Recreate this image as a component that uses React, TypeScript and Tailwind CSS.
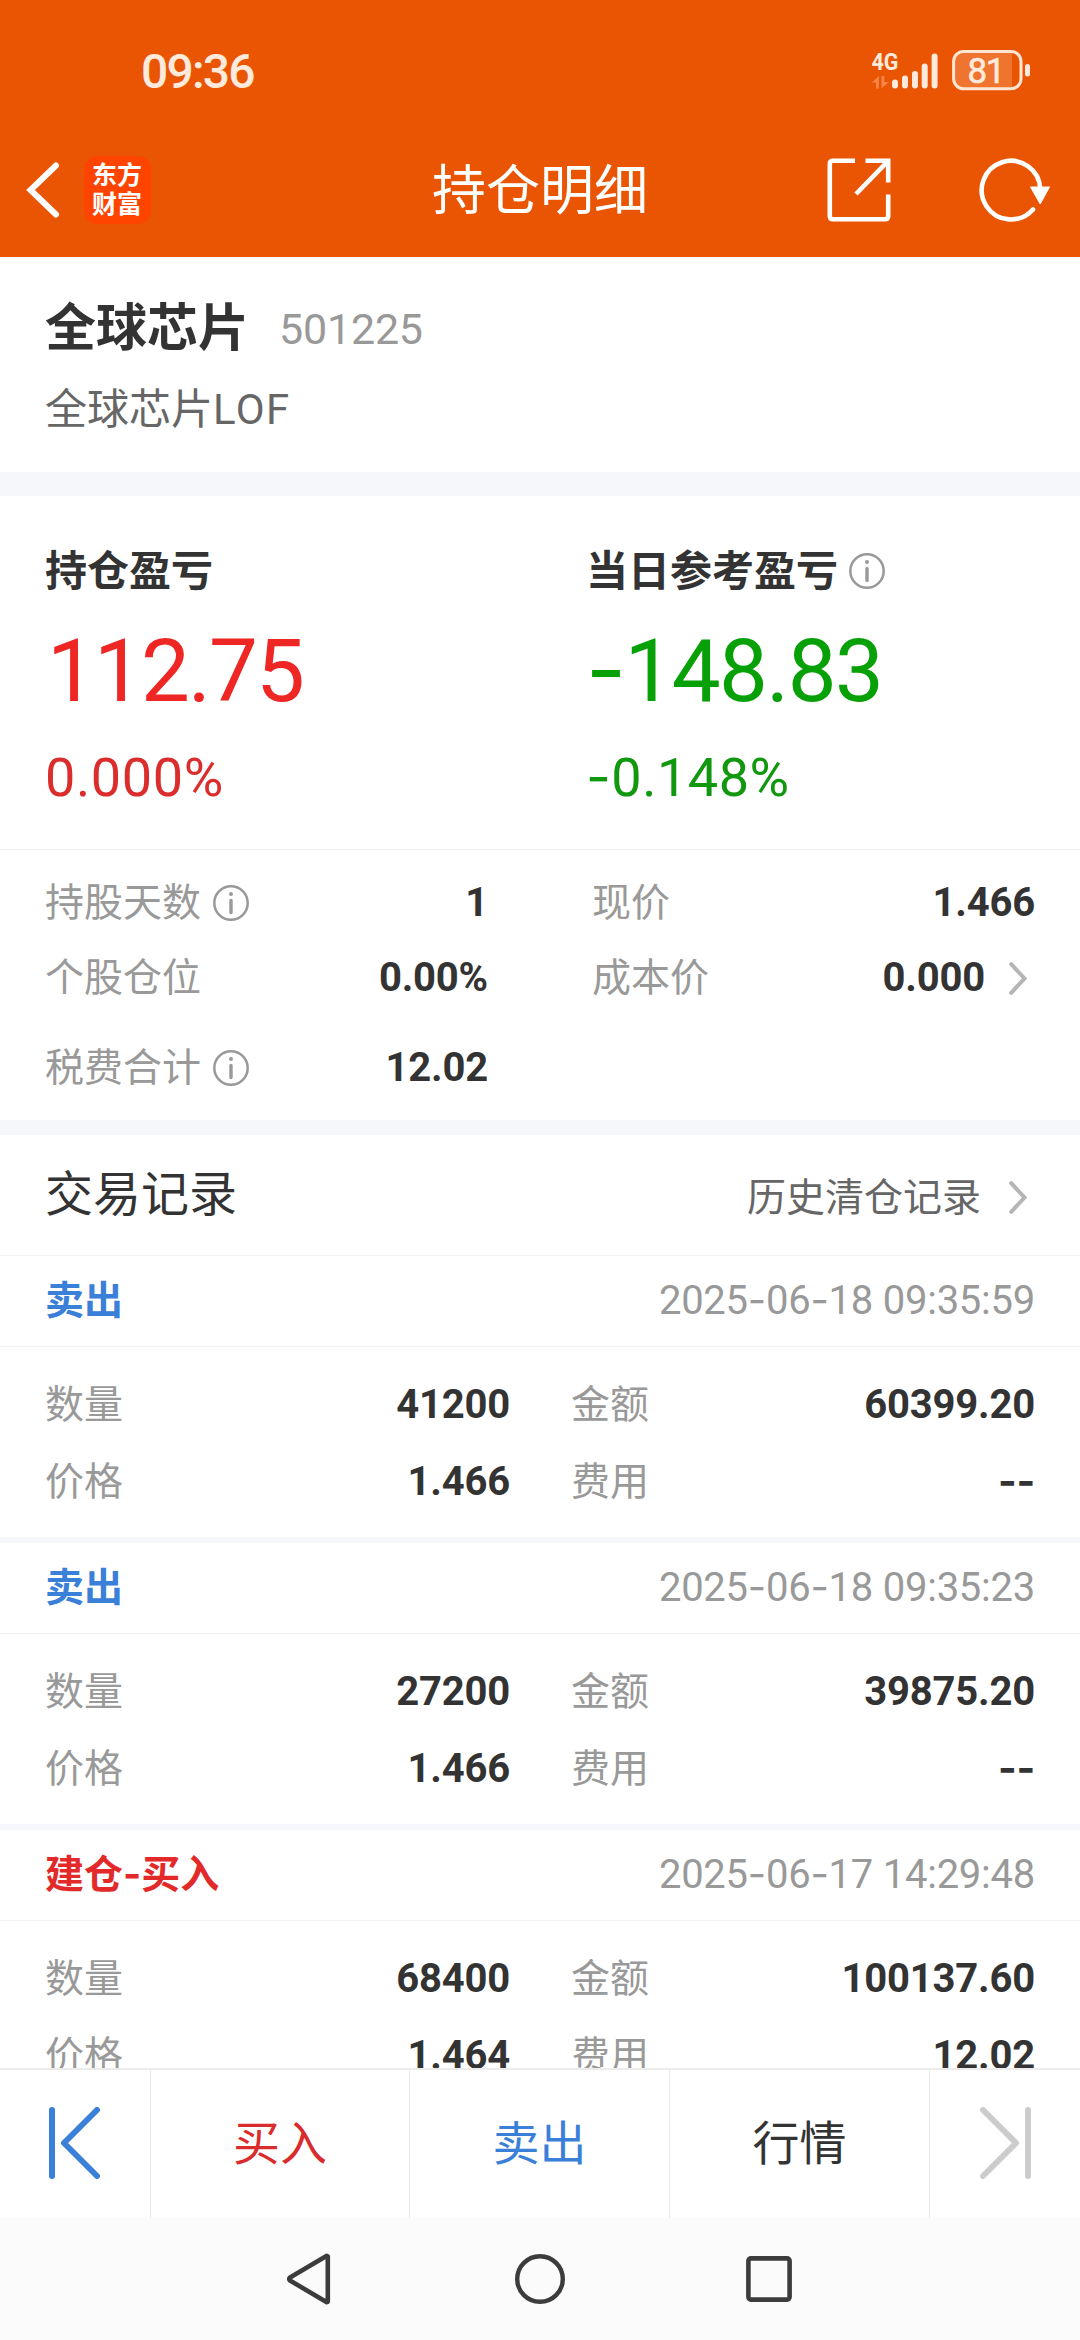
import React from "react";

type Trade = {
  title: string;
  tone: string;
  time: string;
  quantity: string;
  amount: string;
  price: string;
  fee: string;
};

const trades: Trade[] = [
  { title: "卖出", tone: "text-[#3a80d8]", time: "2025-06-18 09:35:59", quantity: "41200", amount: "60399.20", price: "1.466", fee: "--" },
  { title: "卖出", tone: "text-[#3a80d8]", time: "2025-06-18 09:35:23", quantity: "27200", amount: "39875.20", price: "1.466", fee: "--" },
  { title: "建仓-买入", tone: "text-[#e32a2a]", time: "2025-06-17 14:29:48", quantity: "68400", amount: "100137.60", price: "1.464", fee: "12.02" },
];

/** Sets hyphens in Inter, whose dash is long and centred on the digits. */
function Dashed({ text }: { text: string }) {
  return (
    <>
      {text.split(/(-)/).map((part, i) =>
        part === "-" ? (
          <span key={i} className="font-['Inter'] leading-[0]">-</span>
        ) : (
          <React.Fragment key={i}>{part}</React.Fragment>
        ),
      )}
    </>
  );
}

function InfoIcon() {
  return (
    <svg width="36" height="36" viewBox="0 0 36 36" fill="none" className="shrink-0">
      <circle cx="18" cy="18" r="16.7" stroke="#999" strokeWidth="2.5" />
      <circle cx="18" cy="9" r="2" fill="#999" />
      <path d="M18 15.5V27.5" stroke="#999" strokeWidth="3.4" strokeLinecap="round" />
    </svg>
  );
}

function ChevronRight() {
  return (
    <svg width="18" height="33" viewBox="0 0 18 33" fill="none" className="shrink-0">
      <path d="M2.2 2.2L15.5 16.5L2.2 30.8" stroke="#b5b5b5" strokeWidth="4" strokeLinecap="round" />
    </svg>
  );
}

function StatusBar() {
  return (
    <div className="flex h-[140px] items-center justify-between pl-[141px] pr-[50px]">
      <span className="pt-[2px] text-[48px] font-medium leading-[49px] tracking-[-1.8px] text-[#ffeadb]">09:36</span>
      <svg width="158" height="42" viewBox="872 48 158 42" fill="none">
        <text x="871.5" y="69" fontSize="24" fontWeight="700" textLength="27" lengthAdjust="spacingAndGlyphs" fill="#ffeadb">4G</text>
        <path d="M872 81.5L878.8 75V87.5H876V81.5Z" fill="#f5854a" />
        <path d="M881.5 75H884.3V81H889L881.5 87.5Z" fill="#f5854a" />
        <g stroke="#ffeadb" strokeWidth="6" strokeLinecap="round">
          <path d="M895 81.5V84.5M905 77.5V84.5M915 73V84.5M924.7 65.5V84.5M934.6 55.5V84.5" />
        </g>
        <path d="M962 51H1012V87H962Q954 87 954 79V59Q954 51 962 51Z" fill="#ee7430" />
        <rect x="953.6" y="50.4" width="67.4" height="37.4" rx="10" stroke="#ffe6d3" strokeWidth="3" />
        <rect x="1025" y="63" width="5" height="12.5" rx="2.5" fill="#ffeadb" />
        <text x="967.5" y="81.5" fontSize="35" textLength="38" lengthAdjust="spacing" fill="#ffeadb" stroke="#ffeadb" strokeWidth="0.6">81</text>
      </svg>
    </div>
  );
}

function TitleBar() {
  return (
    <div className="grid h-[100px] grid-cols-[1fr_auto_1fr] items-center">
      <div className="flex items-center gap-[24px] pl-[26px]">
        <svg width="34" height="56" viewBox="0 0 34 56" fill="none">
          <path d="M30 3.5L4.5 28L30 52.5" stroke="#fff" strokeWidth="6" strokeLinecap="round" />
        </svg>
        <div className="flex h-[68px] w-[67px] flex-col items-center justify-center rounded-[14px] bg-[#ff4400] pr-[1px] text-[25px] font-bold leading-[29px] text-white">
          <span>东方</span>
          <span>财富</span>
        </div>
      </div>
      <h1 className="pt-[4px] text-[54px] font-normal leading-[60px] text-white">持仓明细</h1>
      <div className="flex items-center justify-end gap-[88px] pr-[30px]">
        <svg width="64" height="64" viewBox="0 0 64 64" fill="none" stroke="#fff" strokeWidth="4.6">
          <path d="M28 2.8H6Q2.8 2.8 2.8 6V58Q2.8 61.2 6 61.2H58Q61.2 61.2 61.2 58V36.5" />
          <path d="M38.5 2.8H61.2V24.5M61.2 2.8L29 36" />
        </svg>
        <svg width="71" height="64" viewBox="0 0 71 64" fill="none">
          <path d="M61.3 31A29.3 29.3 0 1 0 54 51.5" stroke="#fff" strokeWidth="4.6" strokeLinecap="round" />
          <path d="M51.5 29H70.5L61.2 46Z" fill="#fff" stroke="#fff" strokeWidth="1" strokeLinejoin="round" />
        </svg>
      </div>
    </div>
  );
}

function Metric({ label, value, info, chevron, className }: { label: string; value: string; info?: boolean; chevron?: boolean; className: string }) {
  return (
    <div className={`flex items-center text-[39px] leading-[40px] ${className}`}>
      <span className="text-[#999]">{label}</span>
      {info && <span className="ml-[12px]"><InfoIcon /></span>}
      <span className="ml-auto text-[40px] font-bold tracking-[-0.2px] text-[#333]"><Dashed text={value} /></span>
      {chevron && <span className="ml-[24px] mr-[8px]"><ChevronRight /></span>}
    </div>
  );
}

function Summary() {
  return (
    <section className="flex h-[354px] shrink-0 border-b-[1px] border-[#f3f3f4] pt-[46px] pl-[45px]">
      <div className="flex w-[541px] flex-col">
        <div className="flex h-[58px] items-center text-[42px] font-bold text-[#333]">持仓盈亏</div>
        <div className="mt-[19px] flex h-[104px] items-center pl-[2px] text-[87px] leading-[104px] tracking-[-1.9px] text-[#ee2724]">112.75</div>
        <div className="mt-[25px] flex h-[60px] items-center text-[54px] leading-[60px] tracking-[0.6px] text-[#dc2d2d]">0.000%</div>
      </div>
      <div className="flex flex-col">
        <div className="flex h-[58px] items-center gap-[11px] text-[42px] font-bold text-[#333]">
          当日参考盈亏
          <InfoIcon />
        </div>
        <div className="mt-[19px] flex h-[104px] items-center text-[87px] leading-[104px] tracking-[-1.6px] text-[#07a007]">
          <span><Dashed text="-148.83" /></span>
        </div>
        <div className="mt-[25px] flex h-[60px] items-center text-[54px] leading-[60px] tracking-[0.5px] text-[#11980f]">
          <span><Dashed text="-0.148%" /></span>
        </div>
      </div>
    </section>
  );
}

function TradeRecord({ trade }: { trade: Trade }) {
  return (
    <article className="h-[287px] shrink-0 border-b-[6px] border-[#f6f7fa]">
      <header className="flex h-[91px] items-center justify-between border-b border-[#f3f3f4] pl-[45px] pr-[45px]">
        <span className={`text-[39px] font-bold leading-[40px] ${trade.tone}`}><Dashed text={trade.title} /></span>
        <span className="text-[40px] leading-[40px] tracking-[-0.25px] text-[#999]"><Dashed text={trade.time} /></span>
      </header>
      <div className="grid grid-cols-[465px_464px] gap-x-[61px] gap-y-[37px] pl-[45px] pt-[38px]">
        <Metric label="数量" value={trade.quantity} className="h-[40px]" />
        <Metric label="金额" value={trade.amount} className="h-[40px]" />
        <Metric label="价格" value={trade.price} className="h-[40px]" />
        <Metric label="费用" value={trade.fee} className="h-[40px]" />
      </div>
    </article>
  );
}

function ActionBar() {
  return (
    <footer className="grid h-[150px] shrink-0 grid-cols-[151px_259px_260px_260px_150px] border-t-2 border-[#ececec] text-[47px] leading-[50px]">
      <div className="flex items-center justify-center border-r border-[#e9e9e9] pb-[3px]">
        <svg width="52" height="72" viewBox="0 0 52 72" fill="none" stroke="#3a80d8" strokeWidth="6" strokeLinecap="round">
          <path d="M3 3V69" />
          <path d="M48 3L15 36L48 69" strokeLinejoin="round" />
        </svg>
      </div>
      <div className="flex items-center justify-center border-r border-[#e9e9e9] text-[#d92c2c]">买入</div>
      <div className="flex items-center justify-center border-r border-[#e9e9e9] text-[#3a80d8]">卖出</div>
      <div className="flex items-center justify-center border-r border-[#e9e9e9] text-[#333]">行情</div>
      <div className="flex items-center justify-center pb-[3px]">
        <svg width="52" height="72" viewBox="0 0 52 72" fill="none" stroke="#ccc" strokeWidth="6" strokeLinecap="round">
          <path d="M49 3V69" />
          <path d="M4 3L37 36L4 69" strokeLinejoin="round" />
        </svg>
      </div>
    </footer>
  );
}

function SystemNav() {
  return (
    <nav className="flex h-[122px] shrink-0 items-center bg-[#fbfbfb] pl-[286px]">
      <svg width="46" height="52" viewBox="0 0 46 52" fill="none">
        <path d="M41.8 3.5V48.5Q41.5 49.5 40 48.8L4 27.5Q2.4 26 4 24.5L40 3.2Q41.5 2.5 41.8 3.5Z" stroke="#3c3c3c" strokeWidth="4.6" strokeLinejoin="round" />
      </svg>
      <svg width="52" height="52" viewBox="0 0 52 52" fill="none" className="ml-[182px]">
        <circle cx="26" cy="26" r="22.8" stroke="#3c3c3c" strokeWidth="4.4" />
      </svg>
      <svg width="46" height="46" viewBox="0 0 46 46" fill="none" className="ml-[180px]">
        <rect x="2.4" y="2.4" width="41.2" height="41.2" rx="2.5" stroke="#3c3c3c" strokeWidth="4.6" />
      </svg>
    </nav>
  );
}

export default function App() {
  return (
    <div className="flex h-[2340px] w-[1080px] flex-col overflow-hidden bg-white font-['Roboto','Noto_Sans_CJK_SC',sans-serif]">
      <div className="h-[257px] shrink-0 bg-[#ea5504]">
        <StatusBar />
        <TitleBar />
      </div>

      <main className="flex min-h-0 flex-1 flex-col overflow-hidden">
        <section className="h-[239px] shrink-0 border-b-[24px] border-[#f6f7fa] pl-[45px] pt-[42px]">
          <div className="flex h-[60px] items-center">
            <span className="text-[51px] font-bold leading-[60px] text-[#333]">全球芯片</span>
            <span className="ml-[30px] text-[43px] leading-[60px] tracking-[-0.2px] text-[#999]">501225</span>
          </div>
          <div className="mt-[21px] text-[42px] leading-[60px] text-[#666]">
            全球芯片<span className="tracking-[1.4px]">LOF</span>
          </div>
        </section>

        <Summary />

        <section className="h-[285px] shrink-0 border-b-[15px] border-[#f6f7fa] pl-[45px] pt-[33px]">
          <div className="grid grid-cols-[443px_443px] gap-x-[104px]">
            <Metric label="持股天数" value="1" info className="h-[40px]" />
            <Metric label="现价" value="1.466" className="h-[40px]" />
            <Metric label="个股仓位" value="0.00%" className="mt-[35px] h-[40px]" />
            <Metric label="成本价" value="0.000" chevron className="mt-[35px] h-[40px]" />
            <Metric label="税费合计" value="12.02" info className="mt-[50px] h-[40px]" />
          </div>
        </section>

        <section className="flex h-[121px] shrink-0 items-center justify-between border-b border-[#f3f3f4] pl-[45px] pr-[53px]">
          <h2 className="text-[48px] leading-[60px] text-[#333]">交易记录</h2>
          <div className="flex items-center gap-[28px] pt-[5px] text-[39px] leading-[50px] text-[#666]">
            历史清仓记录
            <ChevronRight />
          </div>
        </section>

        {trades.map((trade) => (
          <TradeRecord key={trade.time} trade={trade} />
        ))}
      </main>

      <ActionBar />
      <SystemNav />
    </div>
  );
}
